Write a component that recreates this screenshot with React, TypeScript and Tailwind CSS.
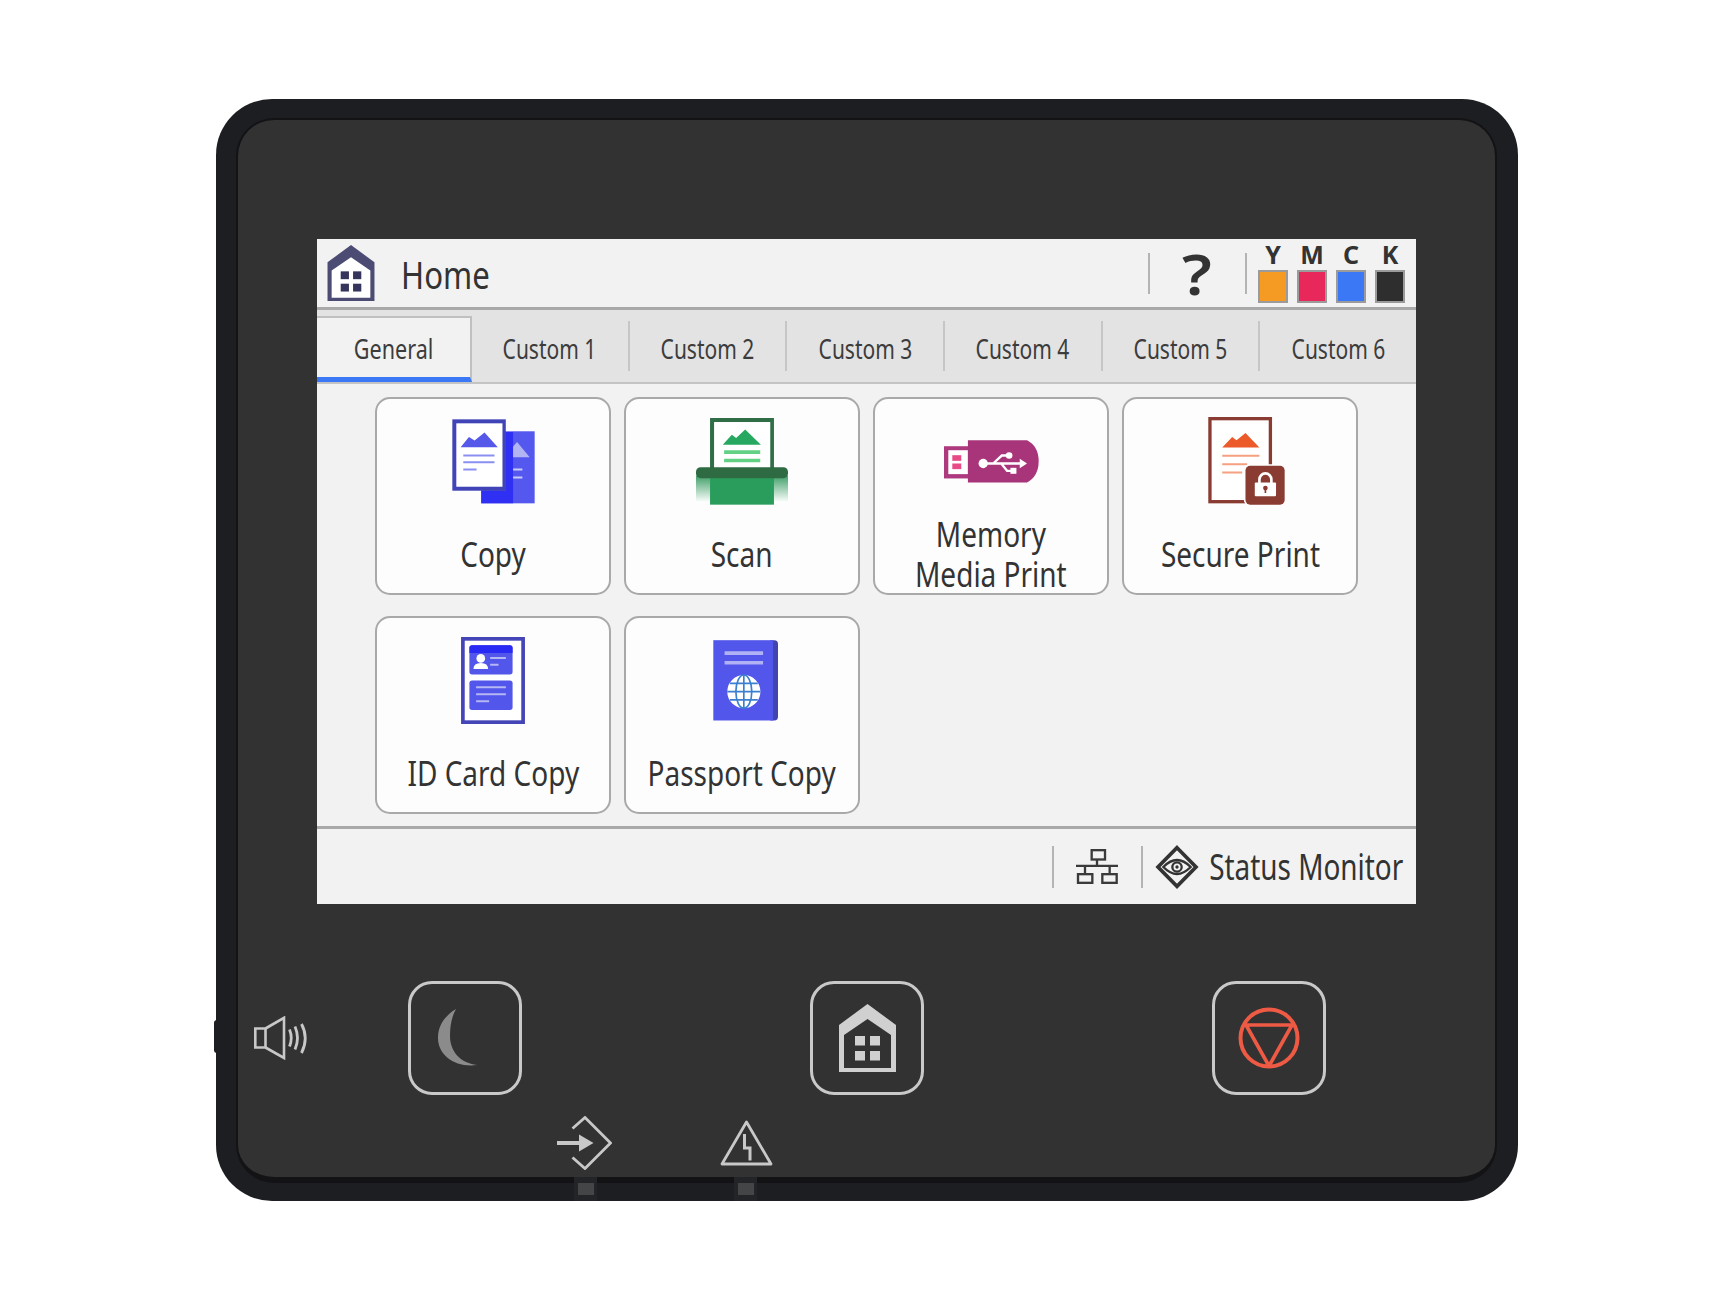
import React from "react";

const HOUSE_OUTER = "M28.5 0L57 21V68H0V21Z";
const HOUSE_INNER = "M28.5 15L5 31V64H52V31Z";

function House({ w, h, roof, inner, win }: { w: number; h: number; roof: string; inner: string; win: string }) {
  return (
    <svg width={w} height={h} viewBox="0 0 57 68" className="block shrink-0">
      <path d={HOUSE_OUTER} fill={roof} />
      <path d={HOUSE_INNER} fill={inner} />
      <rect x="16" y="32" width="10" height="9.5" fill={win} />
      <rect x="31" y="32" width="10" height="9.5" fill={win} />
      <rect x="16" y="47" width="10" height="9.5" fill={win} />
      <rect x="31" y="47" width="10" height="9.5" fill={win} />
    </svg>
  );
}

function CopyIcon() {
  return (
    <svg width="83" height="85" viewBox="244 72 250 254" className="block">
      <rect x="332" y="108" width="161" height="217" fill="#5558ee" />
      <path d="M406 110H428V325H332V287H406Z" fill="#3030f4" />
      <path d="M428 154L440 140L478 186H428Z" fill="#b3b4f2" />
      <path d="M428 223H456M428 247H456" stroke="#c9caf8" strokeWidth="6" />
      <rect x="245" y="72" width="161" height="215" fill="#4044b6" />
      <rect x="257" y="84" width="139" height="191" fill="#ffffff" />
      <path d="M270 156L295 125L312 136L342 112L382 156Z" fill="#5558e8" />
      <path d="M278 181H372M278 201H372M278 223H318" stroke="#8a90f2" strokeWidth="6" />
    </svg>
  );
}

function ScanIcon() {
  return (
    <svg width="92" height="87" viewBox="978 68 275 260" className="block">
      <defs>
        <linearGradient id="scanSide" x1="0" y1="0" x2="0" y2="1">
          <stop offset="0" stopColor="#3f9f68" />
          <stop offset="1" stopColor="#ffffff" />
        </linearGradient>
      </defs>
      <rect x="978" y="240" width="275" height="80" fill="url(#scanSide)" />
      <rect x="1020" y="240" width="191" height="87" fill="#2a9d5c" />
      <rect x="1020" y="68" width="191" height="160" fill="#2f6e46" />
      <rect x="1032" y="80" width="168" height="140" fill="#ffffff" />
      <path d="M1058 148L1085 118L1098 128L1125 102L1172 148Z" fill="#27a860" />
      <path d="M1062 170H1170M1062 195H1170" stroke="#63d184" strokeWidth="11" />
      <rect x="978" y="215" width="275" height="33" rx="14" fill="#2f6b42" />
    </svg>
  );
}

function UsbIcon() {
  return (
    <svg width="95" height="43" viewBox="220 130 286 128" className="block">
      <rect x="220" y="148" width="80" height="97" fill="#ad3a7e" />
      <rect x="233" y="160" width="59" height="72" fill="#ffffff" />
      <rect x="245" y="175" width="27" height="17" fill="#e84a88" />
      <rect x="245" y="200" width="27" height="17" fill="#e84a88" />
      <path d="M292 130H470Q505 148 505 193Q505 238 470 257H292Z" fill="#a8357a" />
      <circle cx="338" cy="200" r="14" fill="#ffffff" />
      <path d="M338 200H452M368 200L394 176H412M392 200L410 222H424" stroke="#ffffff" strokeWidth="7" fill="none" />
      <path d="M448 186L470 200L448 214Z" fill="#ffffff" />
      <circle cx="416" cy="176" r="10" fill="#ffffff" />
      <rect x="420" y="213" width="18" height="18" fill="#ffffff" />
    </svg>
  );
}

function SecureIcon() {
  return (
    <svg width="90" height="88" viewBox="974 68 269 265" className="block">
      <rect x="1018" y="73" width="182" height="250" fill="#ffffff" stroke="#8a3b32" strokeWidth="10" />
      <path d="M1055 160L1085 128L1098 138L1125 116L1167 160Z" fill="#ec5a2a" />
      <path d="M1055 185H1167M1055 210H1130M1055 235H1115" stroke="#f5a080" strokeWidth="6" />
      <rect x="1120" y="210" width="123" height="123" rx="16" fill="#ffffff" />
      <rect x="1125" y="215" width="118" height="117" rx="14" fill="#8a3b32" />
      <path d="M1167 268V256A18 18 0 0 1 1203 256V268" stroke="#ffffff" strokeWidth="8" fill="none" />
      <rect x="1153" y="265" width="64" height="42" rx="3" fill="#ffffff" />
      <circle cx="1185" cy="282" r="7" fill="#8a3b32" />
      <path d="M1185 282V297" stroke="#8a3b32" strokeWidth="5" />
    </svg>
  );
}

function IdIcon() {
  return (
    <svg width="64" height="87" viewBox="273 82 191 260" className="block">
      <rect x="278.5" y="87.5" width="180" height="249" fill="#ffffff" stroke="#4446b8" strokeWidth="11" />
      <rect x="298" y="107" width="129" height="87" rx="8" fill="#5256ea" />
      <path d="M298 130V115Q298 107 306 107H419Q427 107 427 115V130Z" fill="#2a2af5" />
      <circle cx="332" cy="146" r="13" fill="#ffffff" />
      <path d="M310 178Q310 160 332 160Q354 160 354 178Z" fill="#ffffff" />
      <path d="M360 145H407M360 165H385" stroke="#b5b7f5" strokeWidth="6" />
      <rect x="298" y="212" width="129" height="88" rx="8" fill="#5256ea" />
      <path d="M318 232H407M318 253H407M318 274H357" stroke="#b5b7f5" strokeWidth="6" />
    </svg>
  );
}

function PassportIcon() {
  return (
    <svg width="71" height="81" viewBox="1009 90 214 243" className="block">
      <path d="M1200 90H1212Q1223 90 1223 101V321Q1223 332 1212 332H1200Z" fill="#4244b0" />
      <rect x="1028" y="90" width="180" height="242" fill="#5256ea" />
      <path d="M1062 129H1178M1062 158H1178" stroke="#b0b2f5" strokeWidth="11" />
      <circle cx="1120" cy="245" r="50" fill="#ffffff" />
      <g fill="none" stroke="#3b7fd0" strokeWidth="5">
        <ellipse cx="1120" cy="245" rx="24" ry="50" />
        <path d="M1120 195V295M1070 245H1170M1078 220H1162M1078 270H1162" />
      </g>
    </svg>
  );
}

function NetworkIcon() {
  return (
    <svg width="42" height="35" viewBox="143 103 126 104" className="block">
      <g fill="none" stroke="#3a3a3a" strokeWidth="7">
        <rect x="190" y="106" width="40" height="28" />
        <path d="M206 134V153M143 153H269M170 153V178M244 153V178" />
        <rect x="149" y="178" width="43" height="26" />
        <rect x="222" y="178" width="43" height="26" />
      </g>
    </svg>
  );
}

function EyeIcon() {
  return (
    <svg width="44" height="44" viewBox="377 88 132 132" className="block">
      <path d="M443 96L500 154L443 212L386 154Z" fill="none" stroke="#333333" strokeWidth="11" />
      <path d="M402 154Q443 112 484 154Q443 196 402 154Z" fill="none" stroke="#333333" strokeWidth="7" />
      <circle cx="443" cy="154" r="14" fill="none" stroke="#333333" strokeWidth="7" />
      <circle cx="443" cy="154" r="5" fill="#333333" />
    </svg>
  );
}

function SpeakerIcon() {
  return (
    <svg width="54" height="44" viewBox="0 0 54 44" className="block">
      <g fill="none" stroke="#c8c8c8" strokeWidth="2.6">
        <path d="M1.3 12.5H11.5V31.5H1.3Z" />
        <path d="M11.5 12.5L30 1.8V42L11.5 31.5" />
        <path d="M35.5 13.5Q39 22 35.5 30.5M41 10.5Q46 22 41 33.5M47.5 8Q55 22 47.5 37" strokeWidth="2.8" />
      </g>
    </svg>
  );
}

function MoonIcon() {
  return (
    <svg width="39" height="58" viewBox="0 0 39 58" className="mr-[15px] block">
      <path d="M18 0C5 8 0 18 0 29C0 47 18 59 39 56C22 54 12 42 12 27C12 16 14 7 18 0Z" fill="#8b8b8b" />
    </svg>
  );
}

function StopIcon() {
  return (
    <svg width="62" height="62" viewBox="0 0 62 62" className="block">
      <circle cx="31" cy="31" r="28.5" fill="none" stroke="#ee5a43" strokeWidth="4" />
      <path d="M8 18H54L31 59Z" fill="none" stroke="#ee5a43" strokeWidth="3.6" strokeLinejoin="round" />
    </svg>
  );
}

function EnterIcon() {
  return (
    <svg width="55" height="54" viewBox="0 0 55 54" className="block">
      <path d="M15.5 12.5L28 1.5L53.5 27L28 52.5L15.5 41.5" fill="none" stroke="#c8c8c8" strokeWidth="2.8" />
      <path d="M0 27H23" stroke="#c8c8c8" strokeWidth="4" />
      <path d="M22 18.5L36.5 27L22 35.5Z" fill="#c8c8c8" />
    </svg>
  );
}

function WarningIcon() {
  return (
    <svg width="53" height="46" viewBox="0 0 53 46" className="block">
      <path d="M26.5 2L51 44H2Z" fill="none" stroke="#c8c8c8" strokeWidth="2.8" strokeLinejoin="round" />
      <path d="M24.5 14V28H30V40.5" fill="none" stroke="#c8c8c8" strokeWidth="3" />
    </svg>
  );
}

function Narrow({ children, scale = "scale-x-[0.8]" }: { children: React.ReactNode; scale?: string }) {
  return <span className={`inline-block origin-center whitespace-nowrap ${scale}`}>{children}</span>;
}

function Card({ label, icon }: { label: React.ReactNode; icon: React.ReactNode }) {
  return (
    <div className="flex h-[198px] flex-col items-center rounded-[15px] border-2 border-[#a9a9a9] bg-[#fdfdfd] text-[#333333]">
      <div className="flex h-[115px] w-full items-center justify-center pt-[9px]">{icon}</div>
      <div className="flex h-[79px] w-full items-center justify-center text-center text-[35px] leading-[40px]">
        <Narrow>{label}</Narrow>
      </div>
    </div>
  );
}

function HardButton({ children }: { children: React.ReactNode }) {
  return (
    <div className="flex h-[114px] w-[114px] items-center justify-center rounded-[24px] border-[3px] border-[#c9c9c9]">
      {children}
    </div>
  );
}

const TONERS = [
  { l: "Y", c: "bg-[#f59a23]" },
  { l: "M", c: "bg-[#e8285a]" },
  { l: "C", c: "bg-[#3b78f5]" },
  { l: "K", c: "bg-[#2e2e2e]" },
];

const TABS = ["Custom 1", "Custom 2", "Custom 3", "Custom 4", "Custom 5", "Custom 6"];

export default function App() {
  return (
    <div className="h-[1300px] w-[1732px] bg-white pl-[216px] pt-[99px] font-['Noto_Sans',sans-serif]">
      <div className="relative h-[1102px] w-[1302px] rounded-[56px] bg-[#1d1e22] pb-[18px] pl-[20px] pr-[21px] pt-[19px]">
        <div className="absolute -left-[2px] top-[921px] h-[33px] w-[3px] rounded-l-[3px] bg-[#1d1e22]" />
        <div className="absolute bottom-0 left-[358px] flex h-[24px] w-[23px] items-center justify-center bg-[#232427]">
          <div className="h-[12px] w-[16px] bg-[#444546]" />
        </div>
        <div className="absolute bottom-0 left-[518px] flex h-[24px] w-[23px] items-center justify-center bg-[#232427]">
          <div className="h-[12px] w-[16px] bg-[#444546]" />
        </div>

        <div className="h-[1065px] rounded-[38px] border-2 border-b-[6px] border-[#131316] bg-[#323232] pl-[79px] pt-[119px]">
          {/* Touch screen */}
          <div className="flex h-[665px] w-[1099px] flex-col bg-[#f2f2f2] text-[#333333]">
            <div className="flex h-[71px] items-center border-b-[3px] border-[#a9a9a9] pl-[10px] pr-[11px]">
              <House w={48} h={56} roof="#4b4b73" inner="#ffffff" win="#34345c" />
              <span className="ml-[28px] flex w-[85px] justify-center text-[39px] leading-none">
                <Narrow>Home</Narrow>
              </span>
              <div className="ml-auto h-[41px] w-[2px] bg-[#b4b4b4]" />
              <span className="ml-[29px] w-[36px] text-center text-[56px] font-semibold leading-none">
                <Narrow scale="scale-x-[1.15]">?</Narrow>
              </span>
              <div className="ml-[30px] h-[41px] w-[2px] bg-[#b4b4b4]" />
              <div className="ml-[11px] flex gap-[9px] self-start pt-[2px]">
                {TONERS.map((t) => (
                  <div key={t.l} className="flex w-[30px] flex-col items-center">
                    <span className="text-[25px] font-bold leading-[26px]">{t.l}</span>
                    <div className={`mt-[3px] h-[33px] w-[30px] border-[2px] border-[#9b9b9b] ${t.c}`} />
                  </div>
                ))}
              </div>
            </div>

            <div className="flex h-[74px] items-stretch border-b-2 border-[#c4c4c4] bg-[#e3e3e3] text-[28px] text-[#3c3c3c]">
              <div className="mt-[6px] flex w-[155px] items-center justify-center border-b-[5px] border-r-2 border-t-2 border-b-[#3b78f5] border-r-[#c0c0c0] border-t-[#c0c0c0] bg-[#f2f2f2]">
                <Narrow scale="scale-x-[0.77]">General</Narrow>
              </div>
              {TABS.map((t, i) => (
                <React.Fragment key={t}>
                  {i > 0 && <div className="h-[50px] w-[2px] self-center bg-[#c6c6c6]" />}
                  <div className="flex flex-1 items-center justify-center pt-[3px]">
                    <Narrow scale="scale-x-[0.75]">{t}</Narrow>
                  </div>
                </React.Fragment>
              ))}
            </div>

            <div className="flex-1 pl-[58px] pt-[13px]">
              <div className="grid grid-cols-[repeat(4,236px)] gap-x-[13px] gap-y-[21px]">
                <Card label="Copy" icon={<CopyIcon />} />
                <Card label="Scan" icon={<ScanIcon />} />
                <Card label={<>Memory<br />Media Print</>} icon={<UsbIcon />} />
                <Card label="Secure Print" icon={<SecureIcon />} />
                <Card label="ID Card Copy" icon={<IdIcon />} />
                <Card label="Passport Copy" icon={<PassportIcon />} />
              </div>
            </div>

            <div className="flex h-[78px] items-center justify-end border-t-[3px] border-[#a9a9a9] pr-[13px]">
              <div className="h-[42px] w-[2px] bg-[#b4b4b4]" />
              <div className="ml-[22px]"><NetworkIcon /></div>
              <div className="ml-[23px] h-[42px] w-[2px] bg-[#b4b4b4]" />
              <div className="ml-[12px]"><EyeIcon /></div>
              <span className="ml-[11px] flex w-[193px] justify-center text-[36px] leading-none">
                <Narrow scale="scale-x-[0.775]">Status Monitor</Narrow>
              </span>
            </div>
          </div>

          {/* Hardware keys */}
          <div className="ml-[-63px] mt-[77px] flex items-center">
            <SpeakerIcon />
            <div className="ml-[100px]"><HardButton><MoonIcon /></HardButton></div>
            <div className="ml-[288px]"><HardButton><House w={57} h={68} roof="#d0d0d0" inner="#323232" win="#d0d0d0" /></HardButton></div>
            <div className="ml-[288px]"><HardButton><StopIcon /></HardButton></div>
          </div>

          {/* Indicators */}
          <div className="ml-[240px] mt-[21px] flex items-center">
            <EnterIcon />
            <div className="ml-[108px]"><WarningIcon /></div>
          </div>
        </div>
      </div>
    </div>
  );
}
